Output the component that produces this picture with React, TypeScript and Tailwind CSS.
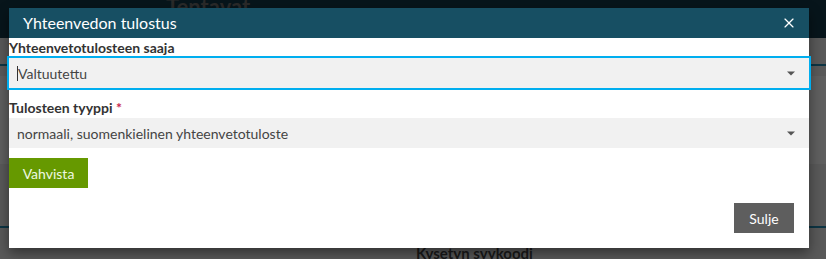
import { X } from 'lucide-react';

function Caret() {
  return (
    <svg width="8" height="5" viewBox="0 0 8 5" className="shrink-0">
      <path d="M0 0.5 H8 L4 4.5 Z" fill="#555" />
    </svg>
  );
}

function SelectBox({ value, focused }: { value: string; focused?: boolean }) {
  return (
    <div
      className={
        focused
          ? 'flex h-[30px] items-center bg-[#f1f1f1] pl-2 pr-[14px] outline-2 outline-[#00aeef]'
          : 'flex h-[30px] items-center bg-[#f1f1f1] pl-2 pr-[14px]'
      }
    >
      {focused && <span className="h-[15px] w-px bg-[#333]" />}
      <span className="flex-1 text-[14px] text-[#444]">{value}</span>
      <Caret />
    </div>
  );
}

export default function App() {
  return (
    <div className="relative h-[259px] w-[826px] overflow-hidden bg-[#595959] font-['Lato',sans-serif]">
      {/* page behind the overlay */}
      <div className="flex h-[38px] items-start bg-[#07151b]">
        <span className="ml-[166px] -mt-[10px] text-[22px] font-bold text-[#2a2a2a]">Tentavat</span>
      </div>
      <div className="mt-[26px] h-[2px] bg-[#0d3544]" />
      <div className="mt-[10px] h-[88px] bg-[#5f5f5f]" />
      <div className="mt-[62px] h-[2px] bg-[#0d3544]" />
      <div className="flex pl-[416px] pt-[14px]">
        <span className="text-[15px] font-bold text-[#1a1a1a]">Kysetyn syykoodi</span>
      </div>

      {/* modal */}
      <div className="absolute left-[9px] top-[8px] w-[800px] bg-white shadow-[0_5px_12px_rgba(0,0,0,0.45)]">
        <div className="flex h-[30px] items-center justify-between bg-[#174f63] pl-[14px] pr-[12px]">
          <span className="text-[16px] text-white">Yhteenvedon tulostus</span>
          <X size={16} strokeWidth={1.75} className="text-white" />
        </div>

        <div className="flex flex-col">
          <label className="h-[20px] text-[14px] leading-[20px] font-bold text-[#333]">
            Yhteenvetotulosteen saaja
          </label>
          <SelectBox value="Valtuutettu" focused />

          <label className="mt-[10px] h-[20px] text-[14px] leading-[20px] font-bold text-[#333]">
            Tulosteen tyyppi <span className="text-[#c7254e]">*</span>
          </label>
          <SelectBox value="normaali, suomenkielinen yhteenvetotuloste" />

          <div className="mt-[10px]">
            <button className="h-[30px] w-[79px] bg-[#669900] text-[14px] text-[#eef8e0]">Vahvista</button>
          </div>
        </div>

        <div className="flex justify-end p-[15px]">
          <button className="h-[30px] w-[60px] bg-[#5e5e5e] text-[14px] text-white">Sulje</button>
        </div>
      </div>
    </div>
  );
}
